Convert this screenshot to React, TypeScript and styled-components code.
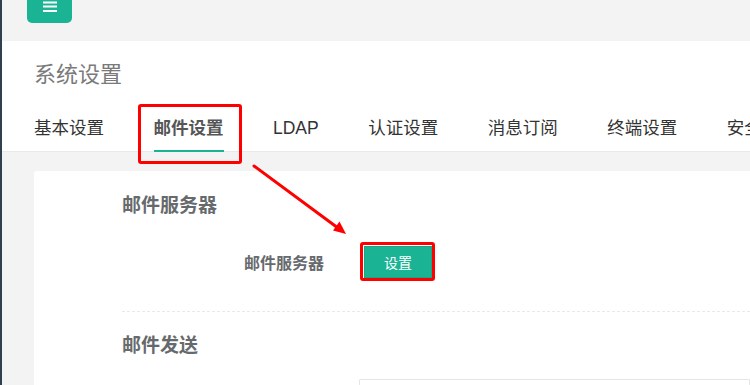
import React from "react";
import styled, { createGlobalStyle } from "styled-components";

const GlobalStyle = createGlobalStyle`
  html, body { margin: 0; padding: 0; }
  body {
    background: #f3f3f4;
    font-family: "Liberation Sans", "Noto Sans CJK SC", sans-serif;
    overflow: hidden;
  }
  * { box-sizing: border-box; }
`;

const Page = styled.div`
  position: relative;
  display: flex;
  width: 750px;
  height: 385px;
  overflow: hidden;
`;

const Sidebar = styled.div`
  width: 2px;
  flex: none;
  background: #2f4050;
`;

const Main = styled.div`
  flex: 1;
  min-width: 0;
  display: flex;
  flex-direction: column;
`;

const TopBar = styled.div`
  flex: none;
  height: 41px;
  padding-left: 25px;
  display: flex;
  align-items: flex-start;
`;

const MenuButton = styled.button`
  width: 45px;
  height: 23px;
  border: none;
  padding: 1px 0 0;
  background: #1ab394;
  border-radius: 0 0 5px 5px;
  display: flex;
  justify-content: center;
  align-items: flex-start;
`;

const Header = styled.div`
  flex: none;
  background: #fff;
  padding: 19px 0 0 32px;
  border-bottom: 1px solid #e7eaec;
`;

const Title = styled.h2`
  margin: 0;
  font-size: 22px;
  line-height: 30px;
  font-weight: 400;
  color: #7a7a7a;
`;

const Tabs = styled.div`
  display: flex;
  gap: 49.5px;
  margin-top: 26px;
  white-space: nowrap;
`;

const Tab = styled.div<{ $active?: boolean }>`
  position: relative;
  font-size: 17.5px;
  line-height: 24px;
  padding-bottom: 10px;
  color: ${(p) => (p.$active ? "#555" : "#333")};
  font-weight: ${(p) => (p.$active ? 700 : 400)};
  border-bottom: 2px solid ${(p) => (p.$active ? "#1ab394" : "transparent")};
  margin-bottom: -1px;
`;

const TabMark = styled.span`
  position: absolute;
  left: -16px;
  right: -18px;
  top: -12px;
  bottom: -14px;
  border: 3px solid #f00;
  border-radius: 3px;
  z-index: 2;
`;

const Content = styled.div`
  flex: 1;
  min-height: 0;
  padding: 19px 0 0 32px;
`;

const Card = styled.div`
  background: #fff;
  height: 100%;
  border-radius: 3px 0 0 0;
  padding: 22px 0 0 88px;
`;

const SectionTitle = styled.h3`
  margin: 0;
  font-size: 19px;
  line-height: 26px;
  font-weight: 700;
  color: #676a6c;
`;

const FormRow = styled.div<{ $top: number }>`
  display: flex;
  align-items: center;
  gap: 40px;
  margin-top: ${(p) => p.$top}px;
`;

const Label = styled.label`
  width: 202px;
  text-align: right;
  font-size: 16px;
  font-weight: 700;
  color: #676a6c;
`;

const ButtonWrap = styled.div`
  position: relative;
  display: flex;
`;

const PrimaryButton = styled.button`
  width: 68px;
  height: 32px;
  border: 1px solid #18a689;
  background: #1ab394;
  color: #fff;
  font-family: inherit;
  font-size: 14px;
  padding: 0;
`;

const ButtonMark = styled.span`
  position: absolute;
  inset: -4px -3px -3px -4px;
  border: 3px solid #f00;
  border-radius: 3px;
`;

const Divider = styled.div`
  margin: 33px 0 21px;
  border-top: 1px dashed #e7eaec;
`;

const Input = styled.div`
  width: 400px;
  height: 34px;
  border: 1px solid #e5e6e7;
  border-radius: 1px;
`;

const Arrow = styled.svg`
  position: absolute;
  left: 0;
  top: 0;
  pointer-events: none;
  z-index: 3;
`;

export default function App() {
  const tabs = ["基本设置", "邮件设置", "LDAP", "认证设置", "消息订阅", "终端设置", "安全设置"];
  return (
    <>
      <GlobalStyle />
      <Page>
        <Sidebar />
        <Main>
          <TopBar>
            <MenuButton aria-label="menu">
              <svg width="14" height="12" viewBox="0 0 14 12">
                <rect x="0" y="0.5" width="14" height="2" fill="#fff" />
                <rect x="0" y="4.5" width="14" height="2" fill="#fff" />
                <rect x="0" y="9" width="14" height="2" fill="#fff" />
              </svg>
            </MenuButton>
          </TopBar>
          <Header>
            <Title>系统设置</Title>
            <Tabs>
              {tabs.map((t) => (
                <Tab key={t} $active={t === "邮件设置"}>
                  {t}
                  {t === "邮件设置" && <TabMark />}
                </Tab>
              ))}
            </Tabs>
          </Header>
          <Content>
            <Card>
              <SectionTitle>邮件服务器</SectionTitle>
              <FormRow $top={27}>
                <Label>邮件服务器</Label>
                <ButtonWrap>
                  <PrimaryButton>设置</PrimaryButton>
                  <ButtonMark />
                </ButtonWrap>
              </FormRow>
              <Divider />
              <SectionTitle>邮件发送</SectionTitle>
              <FormRow $top={20}>
                <Label />
                <Input />
              </FormRow>
            </Card>
          </Content>
        </Main>
        <Arrow width="750" height="385" viewBox="0 0 750 385">
          <line x1="254" y1="166" x2="338" y2="228" stroke="#f00" strokeWidth="3" strokeLinecap="round" />
          <polygon points="346,234 333,230.5 339.5,221.5" fill="#f00" />
        </Arrow>
      </Page>
    </>
  );
}
